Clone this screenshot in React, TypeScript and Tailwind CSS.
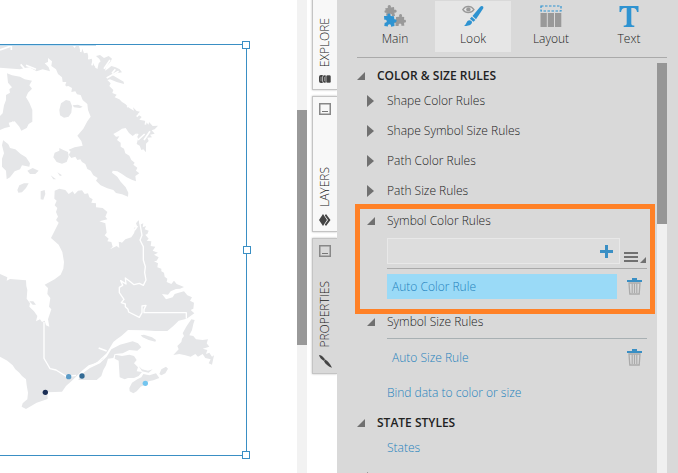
import { useState } from "react";
import clsx from "clsx";

const LAND =
  "M0 136H217L224 144L229 136H236L241 152L247 146L252 160L262 158L268 178L275 176L282 196L292 208L296 190L302 184L297 176L288 168L300 165L312 174L326 168L336 176L331 186L318 200L315 212L324 206L334 198L347 202L359 208L366 217L350 220L338 226L352 234L371 245L372 252L350 246L330 238L322 240L332 250L328 258L340 270L337 279L350 284L344 292L358 298L366 306L376 312L388 324L402 332L399 322L410 333L420 335L413 343L425 351L418 359L434 362L446 374L447 366L458 378L474 377L464 388L455 391L464 401L450 404L456 412L442 413L446 423L438 431L438 457L430 448L424 450L419 437L410 432L414 416L409 400L398 408L387 399L377 384L366 386L356 393L340 402L348 410L358 409L351 420L362 428L362 440L372 446L376 460L388 467L394 480L404 488L400 494L412 503L408 512L418 520L406 528L408 544L397 540L380 532L366 522L352 514L338 512L336 518L352 530L362 545L377 562L385 578L384 590L366 583L348 579L340 570L322 565L302 556L288 542L293 534L280 526L272 512L262 507L256 492L246 486L241 478L232 480L226 470L214 474L206 464L212 455L206 449L224 442L248 437L244 423L232 407L250 386L262 364L272 350L264 330L262 312L248 300L242 285L231 283L226 274L214 276L216 264L205 258L194 260L199 246L188 246L186 232L174 222L168 208L154 198L156 184L144 174L144 186L134 190L146 202L150 214L128 208L110 214L88 202L74 204L60 208L20 205L0 203Z M21 220L36 226L60 230L74 238L96 242L88 256L96 266L84 278L78 292L88 308L97 330L97 365L86 372L80 384L64 392L58 380L44 364L26 368L30 380L14 384L0 390V348L8 340L12 316L18 300L18 285L30 278L28 268L36 262L24 248Z M10 418L24 430L30 444L46 448L62 462L78 472L90 490L88 500L66 496L60 508L44 514L30 532L20 538L18 512L6 500L6 476L12 460L6 436Z M183 310L198 300L210 303L216 318L214 338L206 350L192 353L180 346L178 330Z M164 458L178 452L178 444L190 450L204 456L206 470L200 486L186 491L170 486L160 472Z M218 316L234 314L248 320L240 324L222 322Z M52 570L58 556L72 550L86 550L78 564L66 577L55 578Z M122 574L134 570L136 582L130 599L122 598Z M82 512L98 504L116 512L106 522L90 522Z M152 526L168 538L160 538Z M172 517L186 526L180 528Z M164 572L178 566L196 570L206 582L218 574L224 583L234 572L246 571L254 582L264 580L268 592L278 598L274 608L288 610L288 622L308 624L322 636L316 650L322 658L298 664L316 670L318 684L320 698L314 706L326 716L322 724L334 726L338 740L330 748L350 738L358 744L356 724L366 728L376 718L394 712L402 700L406 688L401 684L412 680L408 670L416 660L420 674L430 670L428 682L438 678L434 688L446 692L442 702L436 704L446 716L440 722L454 724L452 738L466 740L458 752L474 758L462 764L476 772L470 782L462 784L474 790L472 802L484 806L484 814L492 818L494 830L502 836L500 846L514 852L522 842L530 852L552 861L540 866L528 867L512 874L504 884L486 882L498 898L518 892L524 882L536 878L552 874L562 886L576 892L570 902L582 908L580 926L572 930L583 940L560 956L536 962L520 978L502 993H466L430 991L384 990L364 1008L350 1018L340 1026L328 1046L308 1078L290 1088L266 1096L246 1112L228 1130L214 1144L198 1158L186 1175L142 1177L143 1197L110 1208L78 1227L65 1220L68 1210L82 1198L84 1178L80 1156L78 1138L66 1128L58 1118L46 1108L38 1096L22 1082L0 1070V822L22 832L20 842L30 837L78 841L79 858L82 870L80 896L90 910L88 920L102 934L112 948L108 964L120 958L126 966L134 962L138 976L148 980L144 958L154 928L147 920L151 894L142 882L144 864L134 854L164 838L182 824L190 806L192 786L187 756L176 734L153 714L164 692L176 668L168 660L174 650L168 636L172 624L164 616L170 602L163 596Z M235 1140L242 1124L270 1104L300 1090L320 1070L334 1048L360 1034L398 1024L414 1030L424 1042L412 1052L388 1050L368 1060L344 1062L340 1074L324 1076L318 1096L310 1110L304 1128L290 1140Z M346 1064L366 1068L388 1064L402 1068L410 1080L402 1090L414 1102L410 1114L426 1116L416 1128L402 1134L384 1134L374 1138L359 1132L357 1100L356 1082L344 1076Z M388 1164L396 1148L412 1138L424 1132L430 1122L448 1126L468 1120L478 1134L460 1141L446 1144L434 1154L422 1160L410 1174L400 1180L389 1174Z M478 1122L484 1108L498 1100L504 1106L496 1120L484 1126Z M422 1006L432 1004L456 1012L468 1020L466 1025L446 1020L428 1012Z M416 1098L426 1108L444 1112L458 1108L446 1118L426 1114Z M574 958L584 960L580 972L576 990L568 1006L580 1008L588 1018L608 1020L624 1018L620 1030L628 1040L608 1046L622 1050L618 1062L628 1058L636 1070L642 1066L636 1094L626 1090L632 1078L616 1074L608 1062L594 1070L586 1062L572 1070L556 1066L538 1062L520 1065L536 1048L532 1038L544 1026L546 1016L552 1008L548 1000L560 978Z M88 904L100 904L108 914L98 914Z";

const FJORDS =
  "M0 150L34 138V150 M62 193L82 216M78 196L108 208M246 140L242 156M270 156L266 178M284 164L276 196M296 176L288 204M330 180L312 206M356 214L320 234M346 208L336 220M0 410L46 446M30 372L62 410M36 366L48 376M100 226L150 256M140 262L160 236M176 226L166 268M188 248L204 272M358 726L352 700M404 690L412 678M382 322L390 312M410 350L424 336M436 374L440 356M414 402L398 424M434 402L414 420M450 394L432 420M348 520L386 562M296 1044L320 1053";

const BORDERS =
  "M132 966V1075L142 1092L150 1106L168 1110L200 1130L228 1126M240 1126L262 1104L292 1088L318 1064M418 660L426 706L420 720L430 740L430 780L436 800L434 818L438 840L430 856L418 850L402 854L392 846L376 834L378 852L362 842L368 856L358 862L358 878L372 898L364 908L376 912V920L384 928L386 936L418 952L426 938V918L438 916L432 928V938H559V956";

const PINS = [
  { cx: 206, cy: 1130, color: "#5a9bc8" },
  { cx: 246, cy: 1128, color: "#336a94" },
  { cx: 136, cy: 1177, color: "#1b2e55" },
  { cx: 436, cy: 1150, color: "#73c5ef" },
];

const HANDLES = [
  { x: 727, y: 124 },
  { x: 730, y: 739 },
  { x: 727, y: 1354 },
];

function MapCanvas() {
  return (
    <svg
      viewBox="0 0 891 1419"
      preserveAspectRatio="xMinYMin slice"
      className="h-full w-full"
      role="img"
      aria-label="Map of eastern Canada"
    >
      <path d={LAND} fill="#e5e6e8" />
      <path d={FJORDS} fill="none" stroke="#fff" strokeWidth="5" />
      <path d={BORDERS} fill="none" stroke="#fff" strokeWidth="4" strokeLinejoin="round" />
      {PINS.map((pin) => (
        <circle key={pin.cx} cx={pin.cx} cy={pin.cy} r="8" fill={pin.color} />
      ))}
      <path d="M0 136H288" stroke="#c3def0" strokeWidth="4" />
      <path d="M0 133.500H739.500V1366.500H0" fill="none" stroke="#3a8fc4" strokeWidth="3" />
      {HANDLES.map((h) => (
        <rect key={h.y} x={h.x + 0.5} y={h.y + 0.5} width="21" height="21" fill="#fff" stroke="#3a8fc4" strokeWidth="3" />
      ))}
    </svg>
  );
}

function ExploreIcon() {
  return (
    <svg viewBox="0 0 12 10" className="h-[10px] w-3" fill="#444">
      <rect x="0" y="1" width="5" height="8" rx="2" />
      <rect x="3.500" y="1" width="4.500" height="8" rx="2" stroke="#f8f8f8" strokeWidth=".6" />
      <rect x="7" y="1" width="5" height="8" rx="1.500" stroke="#f8f8f8" strokeWidth=".6" />
      <path d="M2 3v4M5.500 3v4" stroke="#aaa" strokeWidth=".7" />
    </svg>
  );
}

function LayersIcon() {
  return (
    <svg viewBox="0 0 12 12" className="size-3" fill="#444">
      <path d="M4 0l4 6-4 6-4-6z" />
      <path d="M7 0l4.500 6L7 12l-1.200-1.600L9 6 5.800 1.600z" />
    </svg>
  );
}

function BrushIcon() {
  return (
    <svg viewBox="0 0 13 13" className="size-[13px]" fill="#444">
      <path d="M0 0c2 0 4 1.500 6 4.200L5 6C2.500 4.500.5 2.500 0 0z" />
      <path d="M6.200 4.400c2.400 1.400 4.700 3.800 6.800 8.400C9.500 11.500 6 9 5 6.200z" />
    </svg>
  );
}

const SIDE_TABS = [
  { id: "explore", label: "EXPLORE", icon: ExploreIcon },
  { id: "layers", label: "LAYERS", icon: LayersIcon },
  { id: "properties", label: "PROPERTIES", icon: BrushIcon },
];

function SideTabs() {
  return (
    <nav className="-mt-[46px] flex w-[25px] shrink-0 flex-col gap-[6px]">
      {SIDE_TABS.map((tab) => {
        const Icon = tab.icon;
        return (
          <button
            key={tab.id}
            className={clsx(
              "flex h-[136px] flex-col items-center border border-r-0 border-[#c4c4c4] pt-[6px] pb-[5px] shadow-[0_0_2px_#bbb]",
              tab.id === "properties" ? "bg-[#d9d9d9]" : "bg-[#f8f8f8]",
            )}
          >
            <svg viewBox="0 0 12 12" className="size-3 shrink-0" fill="none">
              <rect x=".75" y=".75" width="10.500" height="10.500" stroke="#888" strokeWidth="1.500" />
              <path d="M3 8.500h6" stroke="#777" />
            </svg>
            <span className="mt-auto mb-[7px] rotate-180 text-xs leading-4 text-[#222] [writing-mode:vertical-rl]">
              {tab.label}
            </span>
            <Icon />
          </button>
        );
      })}
    </nav>
  );
}

function PuzzleIcon() {
  return (
    <svg viewBox="0 0 22 22" className="size-[22px]">
      <path
        fill="#999"
        d="M1 3.500 4 2.800C3.200.8 4.200 0 5.300 0s2 1 1.500 2.500L10 2l.3 3c1.500-.6 2.400.2 2.400 1.300S11.500 8 10.300 7.500L11 11H7.800c.4-1.500-.4-2.200-1.500-2.200S4.500 9.500 4.800 11L2 10.500l.5-2.800C1 8.200.5 7.500.5 6.500S1.300 5 2 5.500z"
      />
      <path
        fill="#999"
        d="m12 12 3.300-.3C14.700 10 15.500 9 16.600 9s1.900 1.200 1.200 2.700l2.400.3-.2 3c1.200-.6 2 .2 2 1.200s-.8 1.800-2 1.300l.3 3.300h-3c.4-1.500-.3-2.300-1.300-2.300s-1.700 1-1.300 2.500L11.500 21V18c-1.300.5-2-.3-2-1.300s1-1.700 2.300-1.300z"
      />
      <path
        fill="#2e93d1"
        d="M0 11h3.500c-.6-1.500.4-2.500 1.500-2.500s2.200 1 1.500 2.500L10 11.300l.3 3c1.500-.5 2.300.4 2.300 1.500s-.8 2-2.300 1.400L10.500 21 7 21.800c.3-1.700-.5-2.500-1.600-2.500s-1.900.9-1.400 2.300L.3 21l.4-3.300C2 18 2.800 17.200 2.800 16.100S1.700 14.300.3 14.800z"
      />
    </svg>
  );
}

function LookIcon() {
  return (
    <svg viewBox="0 0 22 22" className="size-[22px]" fill="none">
      <path d="M.8 4.600C3.500.4 9 .4 12 4.600 9 8.500 3.500 8.500.8 4.600z" stroke="#999" strokeWidth="1.300" />
      <circle cx="6.400" cy="4.400" r="2.200" fill="#999" />
      <path d="M2 20.700c2-.4 2-3 3.500-4.700 1.500-1.500 4.500-.7 4.500 1.300C9.800 20 6 21.500 2 20.700z" fill="#2e93d1" />
      <path d="M10.500 11 18 2c1-1.200 2.700-1.200 3.200-.2.400.9 0 1.700-.5 2.500L14 14.200z" fill="#2e93d1" />
      <path d="m9.800 11.700 3.600 3.200-2 1.900-3.500-3z" fill="#2e93d1" />
    </svg>
  );
}

function LayoutIcon() {
  return (
    <svg viewBox="0 0 22 22" className="size-[22px]">
      <rect x="1" y="1" width="20" height="5" fill="none" stroke="#2e93d1" strokeWidth="1.200" strokeDasharray="2.500 1.500" />
      <path d="M.5 8h6.300v14H.5zM7.800 8H14v14H7.800zM15 8h6.300v14H15z" fill="#999" />
    </svg>
  );
}

function TextIcon() {
  return (
    <svg viewBox="0 0 22 22" className="size-[22px]" fill="#2e93d1">
      <path d="M1.500 1h19v6H19c-.5-2.800-1.500-4-4-4h-1.700v15.500c0 1.500.8 2 3 2V22H5.700v-1.500c2.200 0 3-.5 3-2V3H7C4.500 3 3.500 4.200 3 7H1.500z" />
    </svg>
  );
}

const PANEL_TABS = [
  { id: "main", label: "Main", icon: PuzzleIcon },
  { id: "look", label: "Look", icon: LookIcon },
  { id: "layout", label: "Layout", icon: LayoutIcon },
  { id: "text", label: "Text", icon: TextIcon },
];

function Arrow({ open }: { open?: boolean }) {
  return open ? (
    <svg viewBox="0 0 8 8" className="size-2 shrink-0" fill="#707070">
      <path d="M8 0v8H0z" />
    </svg>
  ) : (
    <svg viewBox="0 0 8 12" className="h-3 w-2 shrink-0" fill="#707070">
      <path d="M0 0l7 6-7 6z" />
    </svg>
  );
}

function SectionTitle({ label }: { label: string }) {
  return (
    <h2>
      <button aria-expanded className="flex h-5 items-center gap-3 pl-[2px] text-xs font-semibold text-[#222]">
        <Arrow open />
        {label}
      </button>
    </h2>
  );
}

function RuleHeader({ label, open }: { label: string; open?: boolean }) {
  return (
    <button aria-expanded={!!open} className="flex h-[30px] items-center gap-3 pl-3 text-xs text-[#222]">
      <Arrow open={open} />
      {label}
    </button>
  );
}

function TrashButton({ label }: { label: string }) {
  return (
    <button aria-label={label} className="mr-[5px] shrink-0">
      <svg viewBox="0 0 15 17" className="h-[17px] w-[15px]" fill="none">
        <path d="M0 3h15M5 1h5" stroke="#3a8fc4" strokeWidth="2" />
        <path d="M2 5l.8 11h9.400L13 5z" stroke="#aaa" strokeWidth="1.300" />
        <path d="M5.200 5.500v9.500M7.500 5.500v9.500M9.800 5.500v9.500" stroke="#aaa" strokeWidth="1.200" />
      </svg>
    </button>
  );
}

const CLOSED_RULES = ["Shape Color Rules", "Shape Symbol Size Rules", "Path Color Rules", "Path Size Rules"];

function LookRules() {
  const [ruleName, setRuleName] = useState("");

  return (
    <div className="min-w-0 flex-1 overflow-hidden pt-[3px]">
      <SectionTitle label="COLOR & SIZE RULES" />
      {CLOSED_RULES.map((rule) => (
        <RuleHeader key={rule} label={rule} />
      ))}

      <div className="relative pb-2">
        <div className="pointer-events-none absolute -top-[2px] right-[2px] -bottom-[7px] left-0 border-[5px] border-[#ff8127]" />
        <RuleHeader label="Symbol Color Rules" open />
        <div className="mr-[10px] ml-8">
          <div className="flex items-end border-b border-[#aaa] pt-[2px] pb-1">
            <div className="flex h-[26px] flex-1 items-center border border-[#e8e8e8] bg-[#dddddd] pr-[6px]">
              <input
                aria-label="New color rule"
                value={ruleName}
                onChange={(e) => setRuleName(e.target.value)}
                className="h-full min-w-0 flex-1 bg-transparent px-1 text-xs text-[#444] outline-none"
              />
              <button aria-label="Add color rule">
                <svg viewBox="0 0 13 13" className="size-[13px]">
                  <path d="M6.500 0v13M0 6.500h13" stroke="#3a8fc4" strokeWidth="3" />
                </svg>
              </button>
            </div>
            <button aria-label="Color rule menu" className="ml-1">
              <svg viewBox="0 0 23 12" className="h-3 w-[23px]">
                <path d="M0 1h14M0 5h14M0 9h14" stroke="#707070" strokeWidth="2" />
                <path d="M22 5v6h-6z" fill="#707070" />
              </svg>
            </button>
          </div>
          <div className="mt-[5px] flex items-center gap-[10px]">
            <button className="h-[25px] flex-1 bg-[#9adaf7] px-[5px] text-left text-xs text-[#2583bd]">
              Auto Color Rule
            </button>
            <TrashButton label="Delete Auto Color Rule" />
          </div>
        </div>
      </div>

      <RuleHeader label="Symbol Size Rules" open />
      <div className="mt-px mr-[10px] ml-8 border-t border-[#a8b0b3] pt-[6px]">
        <div className="flex items-center gap-[10px]">
          <button className="h-[25px] flex-1 px-[5px] text-left text-xs text-[#2583bd]">Auto Size Rule</button>
          <TrashButton label="Delete Auto Size Rule" />
        </div>
      </div>
      <a href="#bind" className="mt-2 ml-8 block text-xs leading-[30px] text-[#2583bd]">
        Bind data to color or size
      </a>

      <div className="mt-[5px]">
        <SectionTitle label="STATE STYLES" />
        <a href="#states" className="ml-8 block text-xs leading-[30px] text-[#2583bd]">
          States
        </a>
        <RuleHeader label="" />
      </div>
    </div>
  );
}

export default function App() {
  return (
    <div className="flex h-screen overflow-hidden bg-white font-['Open_Sans',sans-serif] font-light">
      <main className="min-w-0 flex-1">
        <MapCanvas />
      </main>
      <div className="mr-[5px] w-[10px] shrink-0 bg-[#f2f2f2] pt-[110px]">
        <div className="h-[235px] bg-[#999]" />
      </div>
      <SideTabs />
      <aside className="flex w-[341px] shrink-0 flex-col bg-[#d9d9d9] pr-[11px] pl-[18px]">
        <div className="ml-[2px] border-b border-[#aaa] pt-px pb-[5px]">
          <div role="tablist" className="flex gap-[2px]">
            {PANEL_TABS.map((tab) => {
              const Icon = tab.icon;
              return (
                <button
                  key={tab.id}
                  role="tab"
                  aria-selected={tab.id === "look"}
                  className={clsx(
                    "flex h-[51px] flex-1 flex-col items-center pt-1 text-xs text-[#222]",
                    tab.id === "look" && "bg-[#e6e6e6]",
                  )}
                >
                  <Icon />
                  <span className="mt-1 leading-4">{tab.label}</span>
                </button>
              );
            })}
          </div>
        </div>
        <div className="mt-[5px] flex min-h-0 flex-1">
          <LookRules />
          <div className="w-[10px] shrink-0 bg-[#f0f0f0]">
            <div className="h-[161px] bg-[#969696]" />
          </div>
        </div>
      </aside>
    </div>
  );
}
